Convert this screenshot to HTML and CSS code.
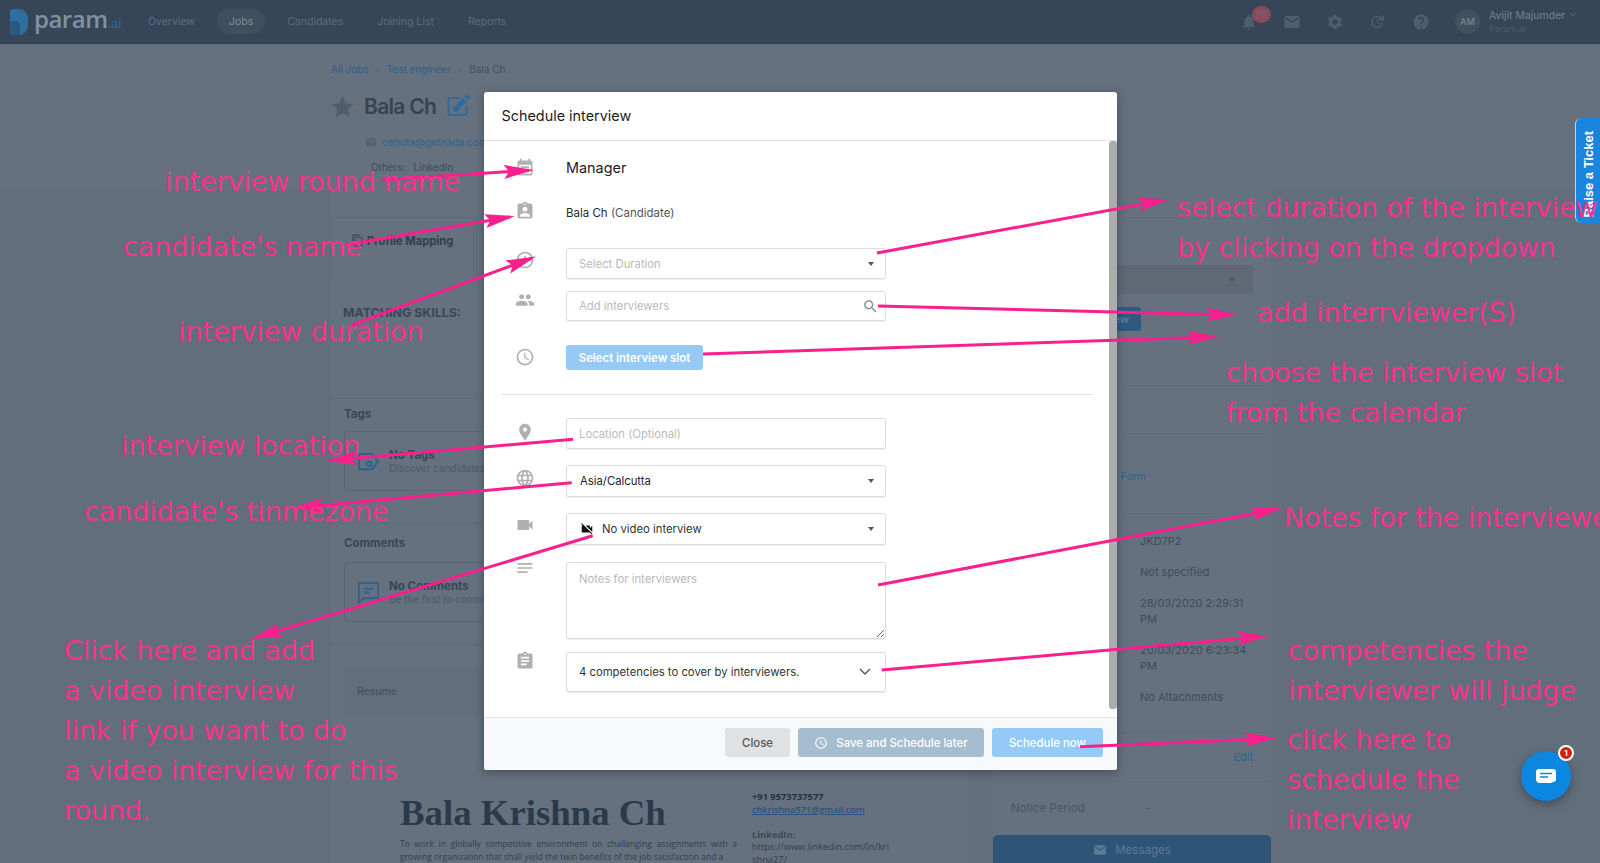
FILE: index.html
```html
<!DOCTYPE html>
<html lang="en">
<head>
    <meta charset="UTF-8">
    <title>Schedule interview</title>
    <link rel="stylesheet" href="styles.css">
</head>
<body>
    <header class="topbar">
        <div class="logo">
            <svg class="logo-mark" viewBox="0 0 18 26"><path fill="#2f6f9f" d="M3 0h5c6 0 10 4 10 10v6c0 6-4 10-9 10 1-2 1-4 1-6v-3c0-3-2-5-5-5H0V3c0-2 1-3 3-3z"/><path fill="#2a5a80" d="M0 12h5c3 0 5 2 5 5v3c0 3-1 6-3 6H3c-2 0-3-1-3-3z"/></svg>
            <span class="logo-name">param</span><span class="logo-ai">.ai</span>
        </div>
        <nav class="nav">
            <a class="nav-item">Overview</a>
            <a class="nav-item nav-active">Jobs</a>
            <a class="nav-item">Candidates</a>
            <a class="nav-item">Joining List</a>
            <a class="nav-item">Reports</a>
        </nav>
        <div class="top-actions">
            <span class="top-icon">
                <svg viewBox="0 0 24 24"><path d="M12 22c1.1 0 2-.9 2-2h-4c0 1.1.9 2 2 2zm6-6v-5c0-3.07-1.63-5.64-4.5-6.32V4c0-.83-.67-1.5-1.5-1.5s-1.5.67-1.5 1.5v.68C7.64 5.36 6 7.92 6 11v5l-2 2v1h16v-1l-2-2z"/></svg>
                <span class="bell-count">76</span>
            </span>
            <span class="top-icon"><svg viewBox="0 0 24 24"><path d="M20 4H4c-1.1 0-2 .9-2 2v12c0 1.1.9 2 2 2h16c1.1 0 2-.9 2-2V6c0-1.1-.9-2-2-2zm0 4l-8 5-8-5V6l8 5 8-5v2z"/></svg></span>
            <span class="top-icon"><svg viewBox="0 0 24 24"><path d="M19.14 12.94c.04-.3.06-.61.06-.94 0-.32-.02-.64-.07-.94l2.03-1.58c.18-.14.23-.41.12-.61l-1.92-3.32c-.12-.22-.37-.29-.59-.22l-2.39.96c-.5-.38-1.03-.7-1.62-.94l-.36-2.54c-.04-.24-.24-.41-.48-.41h-3.84c-.24 0-.43.17-.47.41l-.36 2.54c-.59.24-1.13.57-1.62.94l-2.39-.96c-.22-.08-.47 0-.59.22L2.74 8.87c-.12.21-.08.47.12.61l2.03 1.58c-.05.3-.09.63-.09.94s.02.64.07.94l-2.03 1.58c-.18.14-.23.41-.12.61l1.92 3.32c.12.22.37.29.59.22l2.39-.96c.5.38 1.03.7 1.62.94l.36 2.54c.05.24.24.41.48.41h3.84c.24 0 .44-.17.47-.41l.36-2.54c.59-.24 1.13-.56 1.62-.94l2.39.96c.22.08.47 0 .59-.22l1.92-3.32c.12-.22.07-.47-.12-.61l-2.01-1.58zM12 15.6c-1.98 0-3.6-1.62-3.6-3.6s1.62-3.6 3.6-3.6 3.6 1.62 3.6 3.6-1.62 3.6-3.6 3.6z"/></svg></span>
            <span class="top-icon"><svg viewBox="0 0 24 24"><path d="M11 4a8 8 0 1 0 8 9h-2a6 6 0 1 1-6-7c1.6 0 3 .6 4 1.7L12.5 10H20V2.5l-2.6 2.9C15.8 4.9 13.5 4 11 4zm-.5 4v5l4.2 2.5.7-1.2-3.4-2V8z"/></svg></span>
            <span class="top-icon"><svg viewBox="0 0 24 24"><path d="M12 2C6.48 2 2 6.48 2 12s4.48 10 10 10 10-4.48 10-10S17.52 2 12 2zm1 17h-2v-2h2v2zm2.07-7.75l-.9.92C13.45 12.9 13 13.5 13 15h-2v-.5c0-1.1.45-2.1 1.17-2.83l1.24-1.26c.37-.36.59-.86.59-1.41 0-1.1-.9-2-2-2s-2 .9-2 2H8c0-2.21 1.79-4 4-4s4 1.79 4 4c0 .88-.36 1.68-.93 2.25z"/></svg></span>
            <span class="avatar">AM</span>
            <div class="user">
                <div class="user-name">Avijit Majumder <svg class="user-chevron" viewBox="0 0 10 6"><path d="M1 1l4 4 4-4" fill="none" stroke="#5d6c7b" stroke-width="1"/></svg></div>
                <div class="user-org">Param.ai</div>
            </div>
        </div>
    </header>

    <section class="hero">
        <div class="crumbs">
            <a>All Jobs</a><span class="crumb-sep">&rsaquo;</span><a>Test engineer</a><span class="crumb-sep">&rsaquo;</span><span>Bala Ch</span>
        </div>
        <div class="name-row">
            <svg class="star" viewBox="0 0 24 24"><path d="M12 1l3.4 7.5 8.1.9-6 5.5 1.7 8.1L12 19l-7.200 4 1.700-8.100-6-5.500 8.100-.9z"/></svg>
            <span class="cand-name">Bala Ch</span>
            <svg class="edit" viewBox="0 0 24 24"><path d="M19 13v7H3V5h10l2-2H3a2 2 0 0 0-2 2v15a2 2 0 0 0 2 2h16a2 2 0 0 0 2-2v-9z"/><path d="M21 .6l2.4 2.400a1 1 0 0 1 0 1.400l-1.600 1.600-3.800-3.800L19.600.6a1 1 0 0 1 1.400 0zM16.800 3.800l3.800 3.800L11 17.200l-4.500.7.700-4.500z"/></svg>
        </div>
        <div class="email-row">
            <svg class="email-icon" viewBox="0 0 24 24"><path d="M20 4H4c-1.1 0-2 .9-2 2v12c0 1.1.9 2 2 2h16c1.1 0 2-.9 2-2V6c0-1.1-.9-2-2-2zm0 4l-8 5-8-5V6l8 5 8-5v2z"/></svg>
            <a>cebuta@getnada.com</a>
        </div>
        <div class="others-row"><span>Others:</span><span>LinkedIn</span></div>
    </section>

    <main class="columns">
        <div class="col-main">
            <div class="tabs">
                <div class="tab">
                    <svg class="tab-icon" viewBox="0 0 24 24"><path d="M16 1H4a2 2 0 0 0-2 2v14h2V3h12zm3 4H8a2 2 0 0 0-2 2v14a2 2 0 0 0 2 2h11a2 2 0 0 0 2-2V7a2 2 0 0 0-2-2zm0 16H8V7h11z"/></svg>
                    Profile Mapping
                </div>
                <div class="tab-rest"></div>
            </div>
            <div class="skills"><div class="label label-skills">MATCHING SKILLS:</div></div>
            <div class="block block-tags">
                <div class="label">Tags</div>
                <div class="empty-card">
                    <svg class="empty-icon" viewBox="0 0 24 20"><path d="M2 2h14l6 8-6 8H2z M13 10a2.5 2.5 0 1 0 .01 0z" fill="none" stroke="#2e628f" stroke-width="2"/></svg>
                    <div>
                        <div class="empty-title">No Tags</div>
                        <div class="empty-sub">Discover candidates</div>
                    </div>
                </div>
            </div>
            <div class="block block-comments">
                <div class="label">Comments</div>
                <div class="empty-card">
                    <svg class="empty-icon" viewBox="0 0 24 24"><path d="M2 2h20v16H7l-5 4z M7 8h10 M7 12h6" fill="none" stroke="#2e628f" stroke-width="2"/></svg>
                    <div>
                        <div class="empty-title">No Comments</div>
                        <div class="empty-sub">Be the first to comment</div>
                    </div>
                </div>
            </div>
            <div class="resume-bar">Resume</div>
            <div class="resume">
                <div>
                    <h1 class="resume-name">Bala Krishna Ch</h1>
                    <p class="resume-text">To work in globally competitive environment on challenging assignments with a growing organization that shall yield the twin benefits of the job satisfaction and a</p>
                </div>
                <div class="resume-contact">
                    <b>+91 9573737577</b><br>
                    <a>chkrishna571@gmail.com</a><br><br>
                    <b class="muted">LinkedIn:</b><br>
                    https://www.linkedin.com/in/kri<br>shna27/
                </div>
            </div>
        </div>

        <aside class="col-side">
            <div class="side-card side-action">
                <div class="side-select"><span class="caret caret-dim"></span></div>
                <div class="side-button">Interview</div>
            </div>
            <div class="side-card side-info">
                <div class="side-form"><a>Application Form</a></div>
                <div class="side-values">
                    <div>JKD7P2</div>
                    <div>Not specified</div>
                    <div>28/03/2020 2:29:31 PM</div>
                    <div>20/03/2020 6:23:34 PM</div>
                    <div>No Attachments</div>
                </div>
            </div>
            <div class="side-card side-edit"><a>Edit</a></div>
            <div class="notice"><span>Notice Period</span><span>-</span></div>
            <div class="messages">
                <svg class="messages-icon" viewBox="0 0 24 24"><path d="M20 4H4c-1.1 0-2 .9-2 2v12c0 1.1.9 2 2 2h16c1.1 0 2-.9 2-2V6c0-1.1-.9-2-2-2zm0 4l-8 5-8-5V6l8 5 8-5v2z"/></svg>
                Messages
            </div>
        </aside>
    </main>

    <div class="ticket-tab"><span>Raise a Ticket</span></div>

    <div class="chat">
        <svg class="chat-icon" viewBox="0 0 20 14"><path fill="#fff" d="M3 0h14a3 3 0 0 1 3 3v7a3 3 0 0 1-3 3l-2 1H4a4 4 0 0 1-4-4V3a3 3 0 0 1 3-3z"/><path stroke="#0b87e0" stroke-width="1.5" d="M4 4.5h12M4 8h8"/></svg>
        <span class="chat-badge">1</span>
    </div>

    <div class="modal">
        <div class="modal-head">Schedule interview</div>
        <div class="modal-body">
            <div class="scrollbar"></div>

            <div class="row row-round">
                <svg class="row-icon" viewBox="0 0 24 24"><path d="M17 10H7v2h10v-2zm2-7h-1V1h-2v2H8V1H6v2H5c-1.11 0-1.99.9-1.99 2L3 19c0 1.1.89 2 2 2h14c1.1 0 2-.9 2-2V5c0-1.1-.9-2-2-2zm0 16H5V8h14v11zm-5-5H7v2h7v-2z"/></svg>
                <div class="round-name">Manager</div>
            </div>
            <div class="row row-cand">
                <svg class="row-icon" viewBox="0 0 24 24"><path d="M19 3h-4.18C14.4 1.84 13.3 1 12 1c-1.3 0-2.4.84-2.82 2H5c-1.1 0-2 .9-2 2v14c0 1.1.9 2 2 2h14c1.1 0 2-.9 2-2V5c0-1.1-.9-2-2-2zm-7 0c.55 0 1 .45 1 1s-.45 1-1 1-1-.45-1-1 .45-1 1-1zm0 4c1.66 0 3 1.34 3 3s-1.34 3-3 3-3-1.34-3-3 1.34-3 3-3zm6 12H6v-1.4c0-2 4-3.1 6-3.1s6 1.1 6 3.1V19z"/></svg>
                <div class="cand-line">Bala Ch <span class="cand-role">(Candidate)</span></div>
            </div>
            <div class="row row-duration">
                <svg class="row-icon" viewBox="0 0 24 24"><path d="M12 2a10 10 0 1 0 0 20 10 10 0 0 0 0-20zm0 18a8 8 0 1 1 0-16 8 8 0 0 1 0 16zm1-13h-2v4H7v2h4v3h2z"/></svg>
                <div class="field field-h31"><span class="placeholder">Select Duration</span><span class="caret"></span></div>
            </div>
            <div class="row row-people">
                <svg class="row-icon" viewBox="0 0 24 24"><path d="M16 11c1.66 0 2.99-1.34 2.99-3S17.66 5 16 5c-1.66 0-3 1.34-3 3s1.34 3 3 3zm-8 0c1.66 0 2.99-1.34 2.99-3S9.66 5 8 5C6.34 5 5 6.34 5 8s1.34 3 3 3zm0 2c-2.33 0-7 1.17-7 3.5V19h14v-2.5c0-2.33-4.67-3.5-7-3.5zm8 0c-.29 0-.62.02-.97.05 1.16.84 1.97 1.97 1.97 3.45V19h6v-2.5c0-2.33-4.67-3.5-7-3.5z"/></svg>
                <div class="field field-h30">
                    <input class="bare-input" placeholder="Add interviewers">
                    <svg class="search-icon" viewBox="0 0 24 24"><path d="M15.5 14h-.79l-.28-.27C15.41 12.59 16 11.11 16 9.5 16 5.91 13.09 3 9.5 3S3 5.91 3 9.5 5.91 16 9.5 16c1.61 0 3.09-.59 4.23-1.57l.27.28v.79l5 4.99L20.49 19l-4.99-5zm-6 0C7.01 14 5 11.99 5 9.5S7.01 5 9.5 5 14 7.01 14 9.5 11.99 14 9.5 14z"/></svg>
                </div>
            </div>
            <div class="row row-slot">
                <svg class="row-icon" viewBox="0 0 24 24"><path d="M11.99 2C6.47 2 2 6.48 2 12s4.47 10 9.99 10C17.52 22 22 17.52 22 12S17.52 2 11.99 2zM12 20c-4.42 0-8-3.58-8-8s3.58-8 8-8 8 3.58 8 8-3.58 8-8 8zm.5-13H11v6l5.25 3.15.75-1.23-4.5-2.67z"/></svg>
                <button class="btn btn-slot">Select interview slot</button>
            </div>

            <div class="divider"></div>

            <div class="row row-place">
                <svg class="row-icon" viewBox="0 0 24 24"><path d="M12 2C8.13 2 5 5.13 5 9c0 5.25 7 13 7 13s7-7.75 7-13c0-3.87-3.13-7-7-7zm0 9.5c-1.38 0-2.5-1.12-2.5-2.5s1.12-2.5 2.5-2.5 2.5 1.12 2.5 2.5-1.12 2.5-2.5 2.5z"/></svg>
                <div class="field field-h31"><input class="bare-input" placeholder="Location (Optional)"></div>
            </div>
            <div class="row row-zone">
                <svg class="row-icon" viewBox="0 0 24 24"><path d="M11.99 2C6.47 2 2 6.48 2 12s4.47 10 9.99 10C17.52 22 22 17.52 22 12S17.52 2 11.99 2zm6.93 6h-2.95c-.32-1.25-.78-2.45-1.38-3.56 1.84.63 3.37 1.91 4.33 3.56zM12 4.04c.83 1.2 1.48 2.53 1.91 3.96h-3.82c.43-1.43 1.08-2.76 1.91-3.96zM4.26 14C4.1 13.36 4 12.69 4 12s.1-1.36.26-2h3.38c-.08.66-.14 1.32-.14 2 0 .68.06 1.34.14 2H4.26zm.82 2h2.95c.32 1.25.78 2.45 1.38 3.56-1.84-.63-3.37-1.9-4.33-3.56zm2.95-8H5.08c.96-1.66 2.49-2.93 4.33-3.56C8.81 5.55 8.35 6.75 8.03 8zM12 19.96c-.83-1.2-1.48-2.53-1.91-3.96h3.82c-.43 1.43-1.08 2.76-1.91 3.96zM14.34 14H9.66c-.09-.66-.16-1.32-.16-2 0-.68.07-1.35.16-2h4.68c.09.65.16 1.32.16 2 0 .68-.07 1.34-.16 2zm.25 5.56c.6-1.11 1.06-2.31 1.38-3.56h2.95c-.96 1.65-2.49 2.93-4.33 3.56zM16.36 14c.08-.66.14-1.32.14-2 0-.68-.06-1.34-.14-2h3.38c.16.64.26 1.31.26 2s-.1 1.36-.26 2h-3.38z"/></svg>
                <div class="field field-h32"><span class="value">Asia/Calcutta</span><span class="caret"></span></div>
            </div>
            <div class="row row-video">
                <svg class="row-icon" viewBox="0 0 24 24"><path d="M17 10.5V7c0-.55-.45-1-1-1H4c-.55 0-1 .45-1 1v10c0 .55.45 1 1 1h12c.55 0 1-.45 1-1v-3.5l4 4v-11l-4 4z"/></svg>
                <div class="field field-h32">
                    <span class="video-value">
                        <svg class="video-off" viewBox="0 0 24 24"><path d="M21 6.5l-4 4V7c0-.55-.45-1-1-1H9.82L21 17.18V6.5zM3.27 2L2 3.27 4.73 6H4c-.55 0-1 .45-1 1v10c0 .55.45 1 1 1h12c.21 0 .39-.08.54-.18L19.73 21 21 19.73 3.27 2z"/></svg>
                        No video interview
                    </span>
                    <span class="caret"></span>
                </div>
            </div>
            <div class="row row-notes">
                <svg class="row-icon" viewBox="0 0 24 24"><path d="M3 18h12v-2H3v2zM3 6v2h18V6H3zm0 7h18v-2H3v2z"/></svg>
                <textarea class="notes-input" placeholder="Notes for interviewers"></textarea>
            </div>
            <div class="row row-comp">
                <svg class="row-icon" viewBox="0 0 24 24"><path d="M19 3h-4.18C14.4 1.84 13.3 1 12 1c-1.3 0-2.4.84-2.82 2H5c-1.1 0-2 .9-2 2v14c0 1.1.9 2 2 2h14c1.1 0 2-.9 2-2V5c0-1.1-.9-2-2-2zm-7 0c.55 0 1 .45 1 1s-.45 1-1 1-1-.45-1-1 .45-1 1-1zm2 14H7v-2h7v2zm3-4H7v-2h10v2zm0-4H7V7h10v2z"/></svg>
                <div class="field field-comp">
                    <span class="value-dark">4 competencies to cover by interviewers.</span>
                    <svg class="comp-chevron" viewBox="0 0 12 8"><path d="M1 1l5 5 5-5" fill="none" stroke="#555" stroke-width="1.4"/></svg>
                </div>
            </div>
        </div>
        <div class="modal-foot">
            <button class="btn btn-close">Close</button>
            <button class="btn btn-later">
                <svg class="later-icon" viewBox="0 0 24 24"><path d="M11.99 2C6.47 2 2 6.48 2 12s4.47 10 9.99 10C17.52 22 22 17.52 22 12S17.52 2 11.99 2zM12 20c-4.42 0-8-3.58-8-8s3.58-8 8-8 8 3.58 8 8-3.58 8-8 8zm.5-13H11v6l5.25 3.15.75-1.23-4.5-2.67z"/></svg>
                Save and Schedule later
            </button>
            <button class="btn btn-now">Schedule now</button>
        </div>
    </div>

    <!-- annotations drawn on top of the screenshot -->
    <svg class="arrows" viewBox="0 0 1600 863">
        <defs>
            <marker id="head" viewBox="0 0 30 16" markerWidth="30" markerHeight="16" refX="25" refY="8" orient="auto" markerUnits="userSpaceOnUse">
                <path d="M0 1L30 8 0 15 5 8z" fill="#fb1f8d"/>
            </marker>
        </defs>
        <g stroke="#fb1f8d" stroke-width="3">
            <line x1="381" y1="180" x2="529" y2="170.3" marker-end="url(#head)"/>
            <line x1="345" y1="245" x2="510" y2="216.9" marker-end="url(#head)"/>
            <line x1="352" y1="325" x2="531.3" y2="258.3" marker-end="url(#head)"/>
            <line x1="877" y1="253" x2="1163.7" y2="200.2" marker-end="url(#head)"/>
            <line x1="878" y1="306" x2="1231.7" y2="314.9" marker-end="url(#head)"/>
            <line x1="703" y1="354" x2="1213" y2="336.9" marker-end="url(#head)"/>
            <line x1="573" y1="439.3" x2="331.7" y2="460.3" marker-end="url(#head)"/>
            <line x1="571.7" y1="482.7" x2="298" y2="507.5" marker-end="url(#head)"/>
            <line x1="592.7" y1="535.7" x2="256.5" y2="637.5" marker-end="url(#head)"/>
            <line x1="878" y1="585" x2="1276.8" y2="509.2" marker-end="url(#head)"/>
            <line x1="881.7" y1="670" x2="1263" y2="636.4" marker-end="url(#head)"/>
            <line x1="1080" y1="746.7" x2="1270.7" y2="738.5" marker-end="url(#head)"/>
        </g>
    </svg>

    <div class="note note-round">interview round name</div>
    <div class="note note-cand">candidate's name</div>
    <div class="note note-duration">interview duration</div>
    <div class="note note-location">interview location</div>
    <div class="note note-zone">candidate's tinmezone</div>
    <div class="note note-video">Click here and add<br>a video interview<br>link if you want to do<br>a video interview for this<br>round.</div>
    <div class="note note-select">select duration of the interview<br>by clicking on the dropdown</div>
    <div class="note note-add">add interrviewer(S)</div>
    <div class="note note-slot">choose the interview slot<br>from the calendar</div>
    <div class="note note-notes">Notes for the interviewers</div>
    <div class="note note-comp">competencies the<br>interviewer will judge</div>
    <div class="note note-now">click here to<br>schedule the<br>interview</div>
</body>
</html>
```
FILE: styles.css
```css
* {
    box-sizing: border-box;
}
html, body {
    margin: 0;
    height: 863px;
    overflow: hidden;
}
body {
    position: relative;
    width: 1600px;
    font-family: Inter, "Liberation Sans", sans-serif;
    font-size: 11.3px;
    background: #626e7b;
    color: #3d4a5a;
}

/* top bar */
.topbar {
    display: flex;
    align-items: center;
    height: 44px;
    background: #364658;
    border-bottom: 1px solid #33424f;
}
.logo {
    display: flex;
    align-items: baseline;
    width: 136px;
    padding-left: 10px;
}
.logo-mark {
    width: 18px;
    height: 26px;
    margin-right: 6px;
    align-self: center;
}
.logo-name {
    margin-top: -7px;
    font-family: "Open Sans", sans-serif;
    font-size: 24px;
    font-weight: 600;
    letter-spacing: -0.5px;
    color: #8291a0;
}
.logo-ai {
    font-family: "Open Sans", sans-serif;
    font-size: 13px;
    color: #2e6a9e;
}
.nav {
    display: flex;
    gap: 10px;
}
.nav-item {
    padding: 0 12px;
    height: 25px;
    line-height: 25px;
    border-radius: 13px;
    font-size: 10.5px;
    color: #5c6c7d;
}
.nav-active {
    background: #3f4f60;
    color: #7f8d9b;
}
.top-actions {
    display: flex;
    align-items: center;
    margin-left: auto;
    padding-right: 23px;
}
.top-icon {
    position: relative;
    display: flex;
    justify-content: center;
    width: 43px;
}
.top-icon svg {
    width: 18px;
    height: 18px;
    fill: #4e5e6e;
}
.bell-count {
    position: absolute;
    left: 25px;
    top: -7px;
    width: 19px;
    height: 17px;
    line-height: 17px;
    border-radius: 50%;
    background: #8b4a56;
    color: #5f6f7e;
    font-size: 9px;
    text-align: center;
}
.avatar {
    width: 25px;
    height: 25px;
    line-height: 25px;
    margin-left: 13px;
    border-radius: 50%;
    background: #425160;
    color: #708090;
    font-size: 9px;
    font-weight: 600;
    text-align: center;
}
.user {
    margin-left: 9px;
    width: 88px;
}
.user-name {
    font-size: 10.5px;
    line-height: 14px;
    color: #738291;
    white-space: nowrap;
}
.user-chevron {
    width: 8px;
    height: 5px;
    margin-left: 1px;
    vertical-align: 2px;
}
.user-org {
    font-size: 9px;
    line-height: 12px;
    color: #4b5b6b;
}

/* candidate band */
.hero {
    height: 146px;
    padding: 18px 0 0 331px;
    background: #65717e;
}
.crumbs {
    display: flex;
    height: 14px;
    line-height: 14px;
    font-size: 10px;
    color: #414f5e;
}
.crumbs a {
    color: #2d6089;
}
.crumb-sep {
    width: 18px;
    text-align: center;
    color: #55626f;
}
.name-row {
    display: flex;
    align-items: center;
    height: 26px;
    margin-top: 17px;
}
.star {
    width: 23px;
    height: 23px;
    fill: #4f5d6d;
}
.cand-name {
    margin-left: 10px;
    font-size: 21px;
    font-weight: 600;
    letter-spacing: -0.7px;
    color: #354353;
}
.edit {
    width: 25px;
    height: 24px;
    margin-left: 10px;
    fill: #2e6a9e;
}
.email-row {
    display: flex;
    align-items: center;
    height: 14px;
    margin-top: 16px;
    padding-left: 34px;
    font-size: 10.2px;
    color: #2e6490;
}
.email-icon {
    width: 12px;
    height: 12px;
    margin-right: 5px;
    fill: #55626f;
}
.others-row {
    display: flex;
    gap: 8px;
    height: 14px;
    line-height: 14px;
    margin-top: 11px;
    padding-left: 40px;
    font-size: 10px;
    color: #3f4c5b;
}

/* page columns */
.columns {
    display: grid;
    grid-template-columns: 637px 278px;
    gap: 25px;
    height: 673px;
    margin-left: 331px;
}
.col-main, .col-side {
    background: #65717e;
}
.tabs {
    display: flex;
    height: 87px;
    padding-top: 27px;
}
.tab {
    display: flex;
    align-items: flex-start;
    gap: 3px;
    width: 143px;
    padding: 16px 0 0 19px;
    border: 1px solid #5f6b78;
    border-bottom: none;
    border-radius: 4px 4px 0 0;
    font-weight: 700;
    font-size: 11.2px;
    line-height: 14px;
    color: #333f4d;
    white-space: nowrap;
}
.tab-icon {
    width: 13px;
    height: 13px;
    fill: #3c4856;
}
.tab-rest {
    flex: 1;
    margin-top: 12px;
    border-top: 1px solid #5f6b78;
}
.skills {
    height: 122px;
    padding: 28px 0 0 12px;
    border-bottom: 1px solid #616d7a;
}
.label {
    line-height: 14px;
    font-size: 11.5px;
    font-weight: 700;
    color: #3a4755;
}
.label-skills {
    margin-top: 1px;
    font-size: 12.4px;
}
.block {
    padding-left: 13px;
    border-bottom: 1px solid #616d7a;
}
.block-tags {
    height: 125px;
    padding-top: 8px;
}
.block-comments {
    height: 121px;
    padding-top: 12px;
}
.block-tags .empty-card {
    margin-top: 10px;
}
.block-comments .empty-card {
    margin-top: 12px;
}
.empty-card {
    display: flex;
    align-items: center;
    gap: 9px;
    height: 60px;
    padding-left: 12px;
    border: 1px solid #5a6673;
    border-radius: 4px;
}
.empty-icon {
    width: 23px;
    height: 23px;
}
.empty-title {
    font-weight: 700;
    font-size: 11.5px;
    line-height: 14px;
    color: #3a4755;
}
.empty-sub {
    font-size: 10px;
    line-height: 13px;
    color: #4d5a68;
}
.resume-bar {
    height: 47px;
    line-height: 47px;
    margin: 23px 0 0 13px;
    padding-left: 13px;
    background: #626e7b;
    font-size: 10.5px;
    color: #404d5b;
}
.resume {
    display: grid;
    grid-template-columns: 337px 170px;
    gap: 15px;
    margin: 76px 0 0 69px;
}
.resume-name {
    margin: 0;
    height: 47px;
    line-height: 44px;
    font-family: "Liberation Serif", serif;
    font-size: 36.8px;
    font-weight: 700;
    white-space: nowrap;
    color: #2b3a4b;
}
.resume-text {
    margin: 0;
    font-family: "Open Sans", sans-serif;
    font-size: 8.5px;
    line-height: 12.5px;
    text-align: justify;
    color: #333f4e;
}
.resume-contact {
    font-family: "Open Sans", sans-serif;
    font-size: 9.3px;
    line-height: 12.5px;
    color: #333f4e;
}
.resume-contact b {
    color: #26323f;
}
.resume-contact .muted {
    color: #3d4a58;
}
.resume-contact a {
    font-weight: 600;
    letter-spacing: -0.1px;
    color: #2c5380;
    text-decoration: underline;
}

.col-side {
    padding-top: 27px;
}
.side-card {
    border-top: 1px solid #616d7a;
}
.side-action {
    height: 156px;
    padding: 47px 18px 0;
}
.side-select {
    display: flex;
    align-items: center;
    justify-content: flex-end;
    height: 29px;
    padding-right: 18px;
    background: #5e6975;
    border-radius: 3px;
}
.side-button {
    width: 130px;
    height: 24px;
    line-height: 24px;
    margin-top: 13px;
    padding-right: 12px;
    background: #2e5a82;
    border-radius: 3px;
    font-size: 11px;
    font-weight: 600;
    text-align: right;
    color: #5f7d99;
}
.side-info {
    height: 333px;
    margin-top: 12px;
}
.side-form {
    height: 81px;
    margin-top: 47px;
    padding: 36px 125px 0 0;
    border-top: 1px solid #616d7a;
    border-bottom: 1px solid #616d7a;
    text-align: right;
    font-size: 10.5px;
    line-height: 14px;
    color: #2e6490;
}
.side-values {
    display: flex;
    flex-direction: column;
    gap: 15px;
    padding: 19px 18px 0 147px;
    font-size: 11px;
    line-height: 16px;
    color: #3f4c5c;
}
.side-edit {
    height: 50px;
    margin-top: 14px;
    padding: 17px 18px 0 0;
    border-bottom: 1px solid #616d7a;
    text-align: right;
    font-size: 11px;
    line-height: 14px;
    color: #2e6490;
}
.notice {
    display: flex;
    height: 16px;
    line-height: 16px;
    margin-top: 18px;
    padding-left: 18px;
    font-size: 11.5px;
    color: #4a5765;
}
.notice span:first-child {
    width: 135px;
}
.messages {
    display: flex;
    align-items: center;
    justify-content: center;
    gap: 8px;
    height: 30px;
    margin-top: 19px;
    background: #2e5578;
    border-radius: 5px 5px 0 0;
    font-size: 11.5px;
    color: #5c7a96;
}
.messages-icon {
    width: 14px;
    height: 14px;
    fill: #5c7a96;
}

/* floating widgets */
.ticket-tab {
    position: absolute;
    right: 0;
    top: 118px;
    display: flex;
    align-items: flex-start;
    justify-content: center;
    width: 25px;
    height: 105px;
    padding-top: 13px;
    background: #1b84dc;
    border-left: 1px solid #c3d3df;
    border-radius: 6px 0 0 6px;
}
.ticket-tab span {
    writing-mode: vertical-rl;
    transform: rotate(180deg);
    font-family: "Liberation Sans", sans-serif;
    font-weight: 700;
    font-size: 13px;
    color: #fff;
    white-space: nowrap;
}
.chat {
    position: absolute;
    left: 1521px;
    top: 751px;
    display: flex;
    align-items: center;
    justify-content: center;
    width: 50px;
    height: 50px;
    background: #0b87e0;
    border-radius: 50%;
    box-shadow: 0 3px 8px rgba(30, 40, 50, 0.5);
}
.chat-icon {
    width: 20px;
    height: 14px;
}
.chat-badge {
    position: absolute;
    left: 37px;
    top: -6px;
    width: 16px;
    height: 16px;
    line-height: 12px;
    border: 2px solid #fff;
    border-radius: 50%;
    background: #d81f0a;
    color: #fff;
    font-size: 8px;
    font-weight: 700;
    text-align: center;
}

/* modal */
.modal {
    position: absolute;
    left: 484px;
    top: 92px;
    display: flex;
    flex-direction: column;
    width: 633px;
    height: 678px;
    background: #fff;
    border-radius: 3px;
    overflow: hidden;
    box-shadow: 0 2px 10px rgba(20, 30, 40, 0.45);
}
.modal-head {
    height: 49px;
    line-height: 48px;
    padding-left: 17.5px;
    border-bottom: 1px solid #dedfe1;
    font-size: 14.4px;
    color: #1d1d1d;
}
.modal-body {
    position: relative;
    flex: 1;
}
.scrollbar {
    position: absolute;
    right: 0;
    top: 0;
    width: 8px;
    height: 568px;
    background: #acacac;
    border-radius: 3px;
}
.row {
    display: grid;
    grid-template-columns: 82px 320px;
    align-items: start;
}
.row-icon {
    width: 20px;
    height: 20px;
    justify-self: center;
    fill: #b0b0b0;
}
.row-round {
    margin-top: 17px;
}
.round-name {
    line-height: 20px;
    font-size: 14.4px;
    color: #1d1d1d;
}
.row-cand {
    margin-top: 27px;
}
.row-cand .row-icon {
    margin-top: -4px;
}
.cand-line {
    line-height: 16px;
    font-size: 11.5px;
    color: #2a2a2a;
}
.cand-role {
    color: #555;
}
.row-duration {
    margin-top: 27px;
}
.row-duration .row-icon {
    margin-top: 2px;
}
.row-people {
    margin-top: 12px;
}
.row-people .row-icon {
    margin-top: -1px;
}
.row-slot {
    margin-top: 24px;
}
.row-slot .row-icon {
    margin-top: 2px;
}
.divider {
    width: 591px;
    height: 1px;
    margin: 24px 0 0 18px;
    background: #dedfe1;
}
.row-place {
    margin-top: 23px;
}
.row-place .row-icon {
    margin-top: 4px;
}
.row-zone {
    margin-top: 16px;
}
.row-zone .row-icon {
    margin-top: 3px;
}
.row-video {
    margin-top: 16px;
}
.row-video .row-icon {
    margin-top: 2px;
}
.row-notes {
    margin-top: 17px;
}
.row-notes .row-icon {
    margin-top: -4px;
}
.row-comp {
    margin-top: 13px;
}
.row-comp .row-icon {
    margin-top: -1px;
}
.field {
    display: flex;
    align-items: center;
    justify-content: space-between;
    padding: 0 11px 0 12px;
    border: 1px solid #dcdcdc;
    border-radius: 3px;
    background: #fff;
    box-shadow: 0 1px 0 #ececec;
}
.field-h30 {
    height: 30px;
}
.field-h31 {
    height: 31px;
}
.field-h32 {
    height: 32px;
}
.field-comp {
    height: 40px;
    padding-right: 14px;
}
.placeholder, .bare-input::placeholder, .notes-input::placeholder {
    color: #bababa;
    opacity: 1;
}
.bare-input {
    flex: 1;
    min-width: 0;
    padding: 0;
    border: none;
    outline: none;
    font-family: inherit;
    font-size: 11.3px;
}
.value {
    color: #222;
    padding-left: 1px;
}
.value-dark {
    color: #333;
}
.caret {
    width: 0;
    height: 0;
    border-left: 3.5px solid transparent;
    border-right: 3.5px solid transparent;
    border-top: 4px solid #555;
}
.caret-dim {
    border-top-color: #48535f;
}
.search-icon {
    width: 17px;
    height: 17px;
    margin-right: -5px;
    fill: #8b8b8b;
}
.video-value {
    display: flex;
    align-items: center;
    gap: 8px;
    padding-left: 1px;
    color: #333;
}
.video-off {
    width: 14px;
    height: 14px;
    fill: #111;
}
.notes-input {
    display: block;
    height: 77px;
    padding: 9px 12px;
    border: 1px solid #dcdcdc;
    border-radius: 3px;
    box-shadow: 0 1px 0 #ececec;
    font-family: inherit;
    font-size: 11.3px;
}
.comp-chevron {
    width: 12px;
    height: 8px;
}
.modal-foot {
    display: flex;
    align-items: center;
    justify-content: flex-end;
    gap: 8px;
    height: 53px;
    padding: 0 14px 3px;
    background: #f8f9fb;
    border-top: 1px solid #e2e3e6;
}
.btn {
    display: flex;
    align-items: center;
    justify-content: center;
    padding: 0;
    border: none;
    border-radius: 3px;
    font-family: inherit;
    font-size: 11.4px;
    font-weight: 500;
    color: #fff;
}
.btn-slot {
    width: 137px;
    height: 25px;
    background: #94caf5;
    font-weight: 600;
}
.btn-close {
    width: 65px;
    height: 29px;
    background: #e0e1e3;
    color: #555;
}
.btn-later {
    gap: 8px;
    width: 186px;
    height: 29px;
    background: #a6bccf;
}
.later-icon {
    width: 14px;
    height: 14px;
    fill: #fff;
}
.btn-now {
    width: 111px;
    height: 29px;
    background: #94caf5;
}

/* annotations */
.arrows {
    position: absolute;
    left: 0;
    top: 0;
    width: 1600px;
    height: 863px;
    pointer-events: none;
}
.note {
    position: absolute;
    font-family: "DejaVu Sans", sans-serif;
    font-size: 26.8px;
    line-height: 40px;
    white-space: nowrap;
    color: #f8318f;
}
.note-round { left: 165px; top: 162px; }
.note-cand { left: 123px; top: 227px; }
.note-duration { left: 178px; top: 312px; }
.note-location { left: 121px; top: 426px; }
.note-zone { left: 84px; top: 492px; }
.note-video { left: 64px; top: 631px; }
.note-select { left: 1177px; top: 188px; }
.note-add { left: 1257px; top: 293px; }
.note-slot { left: 1226px; top: 353px; }
.note-notes { left: 1284px; top: 498px; }
.note-comp { left: 1288px; top: 631px; }
.note-now { left: 1287px; top: 720px; }
```
